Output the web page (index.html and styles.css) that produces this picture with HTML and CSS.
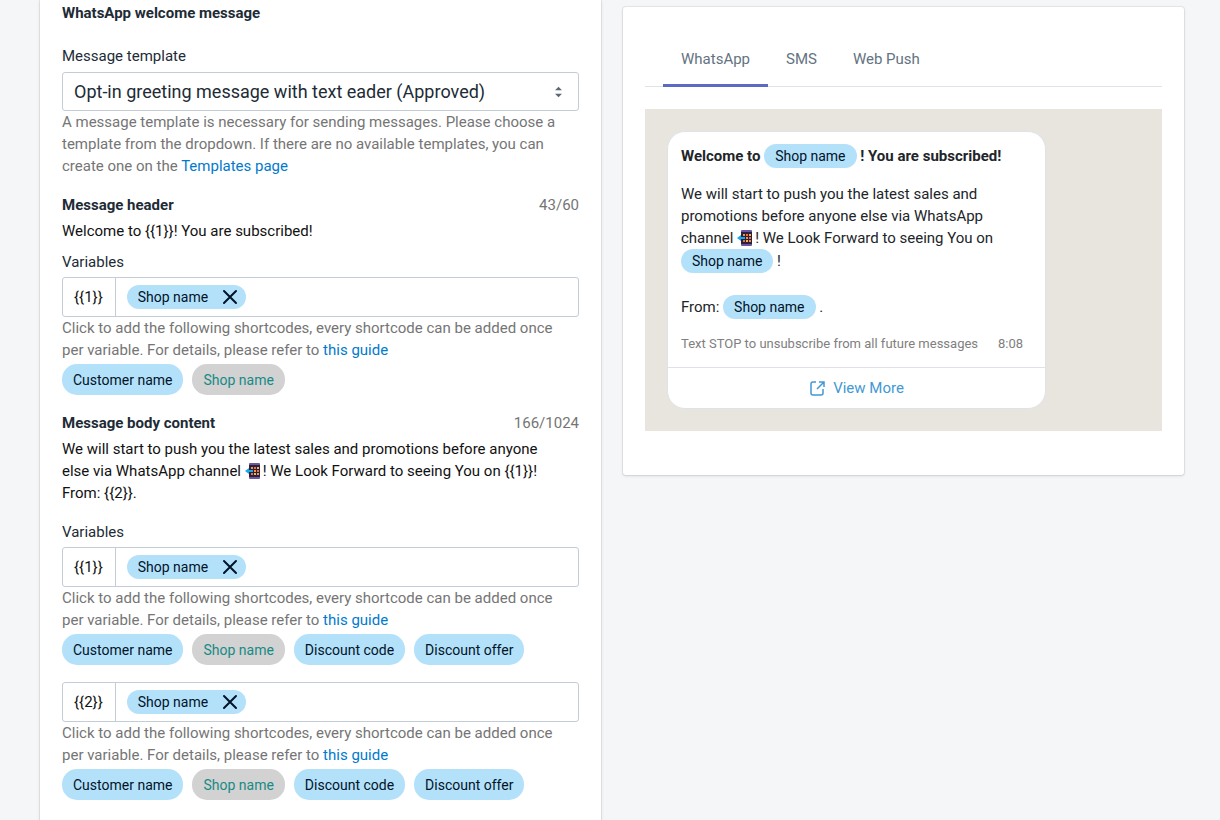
FILE: index.html
```
<!DOCTYPE html>
<html lang="en">
<head>
  <meta charset="UTF-8">
  <meta name="viewport" content="width=device-width, initial-scale=1.0">
  <title>WhatsApp welcome message</title>
  <link rel="stylesheet" href="styles.css">
</head>
<body>
  <!-- icons used more than once -->
  <svg class="sprite" aria-hidden="true">
    <symbol id="icon-close" viewBox="0 0 16 16">
      <path d="M2 2l12 12M14 2L2 14" fill="none" stroke="currentColor" stroke-width="2" stroke-linecap="round"/>
    </symbol>
    <symbol id="icon-phone" viewBox="0 0 15 16">
      <rect x="4" y="0" width="11" height="16" rx="1" fill="#6b55a5"/>
      <rect x="4" y="2" width="11" height="12" fill="#2c2138"/>
      <path d="M6 4h2v2H6zM9 7h2v2H9zM12 10h2v2h-2z" fill="#f5943b"/>
      <path d="M9 4h2v2H9zM12 7h2v2h-2zM6 10h2v2H6z" fill="#ef6b4a"/>
      <path d="M12 4h2v2h-2zM9 10h2v2H9z" fill="#f0b45a"/>
      <path d="M0 8l4-3v2h4v2H4v2z" fill="#19a7ee"/>
    </symbol>
  </svg>

  <main class="container">
    <section class="card settings">
      <h2>WhatsApp welcome message</h2>

      <div class="field template">
        <label for="template">Message template</label>
        <div class="select-box">
          <select id="template">
            <option>Opt-in greeting message with text eader (Approved)</option>
          </select>
          <svg class="select-icon" viewBox="0 0 8 12" aria-hidden="true">
            <path d="M0 4l4-4 4 4zM0 8l4 4 4-4z" fill="#5c6975"/>
          </svg>
        </div>
        <p class="help">A message template is necessary for sending messages. Please choose a template from the dropdown. If there are no available templates, you can create one on the <a href="#">Templates page</a></p>
      </div>

      <div class="message">
        <div class="message-title">
          <h3>Message header</h3>
          <span class="count">43/60</span>
        </div>
        <p class="content">Welcome to {{1}}! You are subscribed!</p>
        <h4>Variables</h4>
        <div class="variable">
          <div class="variable-box">
            <span class="key">{{1}}</span>
            <span class="tag">Shop name
              <button type="button" class="remove" aria-label="Remove Shop name"><svg><use href="#icon-close"/></svg></button>
            </span>
          </div>
          <p class="help">Click to add the following shortcodes, every shortcode can be added once per variable. For details, please refer to <a href="#">this guide</a></p>
          <div class="shortcodes">
            <button type="button">Customer name</button>
            <button type="button" disabled>Shop name</button>
          </div>
        </div>
      </div>

      <div class="message body-message">
        <div class="message-title">
          <h3>Message body content</h3>
          <span class="count">166/1024</span>
        </div>
        <p class="content">We will start to push you the latest sales and promotions before anyone else via WhatsApp channel <svg class="phone" role="img" aria-label="phone"><use href="#icon-phone"/></svg>! We Look Forward to seeing You on {{1}}!<br>From: {{2}}.</p>
        <h4>Variables</h4>
        <div class="variable">
          <div class="variable-box">
            <span class="key">{{1}}</span>
            <span class="tag">Shop name
              <button type="button" class="remove" aria-label="Remove Shop name"><svg><use href="#icon-close"/></svg></button>
            </span>
          </div>
          <p class="help">Click to add the following shortcodes, every shortcode can be added once per variable. For details, please refer to <a href="#">this guide</a></p>
          <div class="shortcodes">
            <button type="button">Customer name</button>
            <button type="button" disabled>Shop name</button>
            <button type="button">Discount code</button>
            <button type="button">Discount offer</button>
          </div>
        </div>
        <div class="variable">
          <div class="variable-box">
            <span class="key">{{2}}</span>
            <span class="tag">Shop name
              <button type="button" class="remove" aria-label="Remove Shop name"><svg><use href="#icon-close"/></svg></button>
            </span>
          </div>
          <p class="help">Click to add the following shortcodes, every shortcode can be added once per variable. For details, please refer to <a href="#">this guide</a></p>
          <div class="shortcodes">
            <button type="button">Customer name</button>
            <button type="button" disabled>Shop name</button>
            <button type="button">Discount code</button>
            <button type="button">Discount offer</button>
          </div>
        </div>
      </div>
    </section>

    <section class="card preview">
      <div class="tabs" role="tablist">
        <button type="button" role="tab" class="active" aria-selected="true">WhatsApp</button>
        <button type="button" role="tab" aria-selected="false">SMS</button>
        <button type="button" role="tab" aria-selected="false">Web Push</button>
      </div>
      <div class="chat">
        <div class="bubble">
          <div class="bubble-text">
            <p class="bubble-title">Welcome to <span class="tag">Shop name</span> ! You are subscribed!</p>
            <p>We will start to push you the latest sales and promotions before anyone else via WhatsApp channel <svg class="phone" role="img" aria-label="phone"><use href="#icon-phone"/></svg>! We Look Forward to seeing You on <span class="tag">Shop name</span> !</p>
            <p class="from">From: <span class="tag">Shop name</span> .</p>
            <div class="bubble-footer">
              <span>Text STOP to unsubscribe from all future messages</span>
              <span>8:08</span>
            </div>
          </div>
          <a href="#" class="view-more">
            <svg viewBox="0 0 16 16" aria-hidden="true">
              <path d="M7 2H4a2 2 0 0 0-2 2v9a2 2 0 0 0 2 2h8a2 2 0 0 0 2-2V9M10 2h5v5M15 2L8 9" fill="none" stroke="currentColor" stroke-width="1.5"/>
            </svg>
            View More
          </a>
        </div>
      </div>
    </section>
  </main>
</body>
</html>
```
FILE: styles.css
```
* {
  margin: 0;
  padding: 0;
  box-sizing: border-box;
}
body {
  background: #f4f6f8;
  color: #212529;
  font-family: Roboto, sans-serif;
  font-size: 15px;
  line-height: 22px;
}
h2,
h3 {
  font-size: 15px;
  font-weight: bold;
  color: #212b36;
}
h4 {
  font-size: 15px;
  font-weight: normal;
  color: #212b36;
}
a {
  color: #007ace;
  text-decoration: none;
}
button,
select {
  font: inherit;
  border: none;
  background: none;
  cursor: pointer;
}
.sprite {
  display: none;
}
.container {
  display: grid;
  grid-template-columns: 1fr 1fr;
  align-items: start;
  gap: 22px;
  padding: 0 36px 0 40px;
}
.card {
  background: #fff;
  box-shadow: 0 0 0 1px rgba(63, 63, 68, 0.08), 0 1px 3px rgba(63, 63, 68, 0.15);
}
.settings {
  padding: 2px 22px 22px;
}
.template {
  margin-top: 21px;
}
.template label {
  display: block;
  margin-bottom: 5px;
  color: #212b36;
}
.select-box {
  position: relative;
}
.select-box select {
  display: block;
  width: 100%;
  height: 39px;
  padding: 0 36px 0 11px;
  border: 1px solid #c4cdd5;
  border-radius: 3px;
  font-size: 18px;
  color: #212b36;
  appearance: none;
}
.select-icon {
  position: absolute;
  top: 14px;
  right: 17px;
  width: 7px;
  height: 12px;
  pointer-events: none;
}
.help {
  padding-right: 11px;
  color: #757575;
}
.message {
  margin-top: 17px;
}
.message-title {
  display: flex;
  justify-content: space-between;
}
.count {
  color: #757575;
}
.content {
  margin-top: 4px;
  padding-right: 22px;
  color: #111;
}
.message h4 {
  margin: 9px 0 4px;
}
.body-message h4 {
  margin-top: 17px;
}
.variable + .variable {
  margin-top: 17px;
}
.variable-box {
  display: flex;
  align-items: center;
  height: 40px;
  border: 1px solid #c4cdd5;
  border-radius: 3px;
}
.key {
  align-self: stretch;
  padding: 8px 12px 8px 11px;
  border-right: 1px solid #c4cdd5;
  margin-right: 11px;
  color: #111;
}
.tag {
  display: inline-flex;
  align-items: center;
  height: 24px;
  padding: 0 11px;
  border-radius: 12px;
  background: #b4e1fa;
  color: #001429;
  font-size: 14px;
  font-weight: normal;
}
.variable-box .tag {
  gap: 14px;
  padding-right: 8px;
}
.remove {
  display: flex;
  color: #001429;
}
.remove svg {
  width: 16px;
  height: 16px;
}
.shortcodes {
  display: flex;
  flex-wrap: wrap;
  gap: 9px;
  margin-top: 3px;
}
.shortcodes button {
  height: 31px;
  padding: 0 11px;
  border-radius: 15px;
  background: #b4e1fa;
  color: #001429;
  font-size: 14px;
}
.shortcodes button:disabled {
  background: #d2d2d2;
  color: #178a85;
  cursor: default;
}
.phone {
  width: 15px;
  height: 16px;
  margin-right: 3px;
  vertical-align: -3px;
}

/* preview */
.preview {
  margin-top: 7px;
  padding: 22px 22px 44px;
  border-radius: 3px;
}
.tabs {
  display: flex;
  padding: 0 18px;
  border-bottom: 1px solid #dfe3e8;
}
.tabs button {
  height: 58px;
  padding: 4px 18px 0;
  border-bottom: 3px solid transparent;
  margin-bottom: -1px;
  color: #637381;
}
.tabs .active {
  border-bottom-color: #5c6ac4;
}
.chat {
  margin-top: 22px;
  padding: 22px;
  background: #e8e4de;
}
.bubble {
  max-width: 379px;
  border: 1px solid #dfe3e8;
  border-radius: 18px;
  background: #fff;
}
.bubble-text {
  padding: 12px 22px 12px 13px;
}
.bubble-title {
  margin-bottom: 15px;
  font-weight: bold;
}
.from {
  margin-top: 22px;
}
.bubble-footer {
  display: flex;
  justify-content: space-between;
  margin-top: 14px;
  font-size: 13px;
  color: #808080;
}
.view-more {
  display: flex;
  justify-content: center;
  align-items: center;
  gap: 8px;
  height: 41px;
  border-top: 1px solid #dfe3e8;
  color: #4299d5;
}
.view-more svg {
  width: 16px;
  height: 16px;
}
```
